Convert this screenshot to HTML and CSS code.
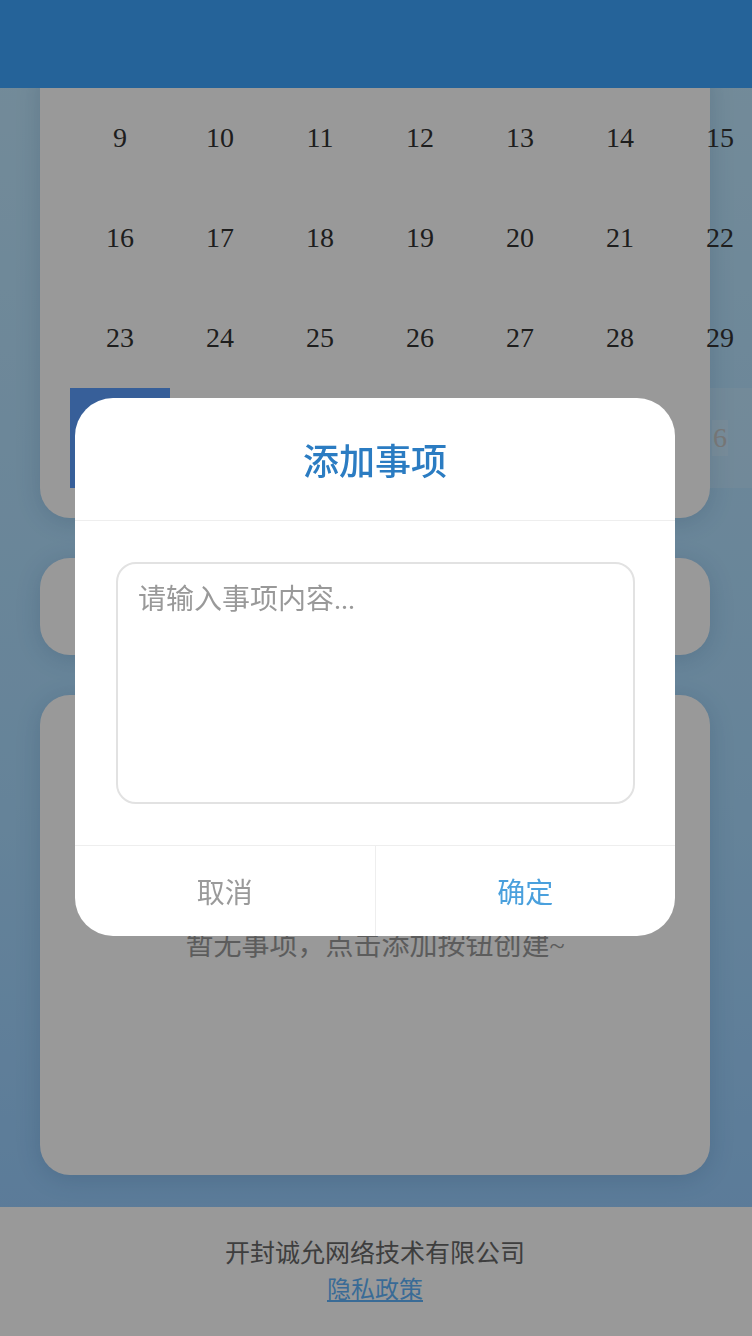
FILE: index.html
```html
<!DOCTYPE html>
<html lang="zh-CN">
<head>
<meta charset="utf-8">
<title>日历事项</title>
<link rel="stylesheet" href="styles.css">
</head>
<body>
<div class="page">
  <header class="topbar"></header>
  <main class="content">
    <section class="card calendar">
      <div class="cal-grid">
        <div class="day"><span>9</span></div><div class="day"><span>10</span></div><div class="day"><span>11</span></div><div class="day"><span>12</span></div><div class="day"><span>13</span></div><div class="day"><span>14</span></div><div class="day"><span>15</span></div>
        <div class="day"><span>16</span></div><div class="day"><span>17</span></div><div class="day"><span>18</span></div><div class="day"><span>19</span></div><div class="day"><span>20</span></div><div class="day"><span>21</span></div><div class="day"><span>22</span></div>
        <div class="day"><span>23</span></div><div class="day"><span>24</span></div><div class="day"><span>25</span></div><div class="day"><span>26</span></div><div class="day"><span>27</span></div><div class="day"><span>28</span></div><div class="day"><span>29</span></div>
        <div class="day selected"><span>30</span></div><div class="day other"><span>1</span></div><div class="day other"><span>2</span></div><div class="day other"><span>3</span></div><div class="day other"><span>4</span></div><div class="day other"><span>5</span></div><div class="day other"><span>6</span></div>
      </div>
    </section>
    <section class="card actions"></section>
    <section class="card events">
      <p class="empty">暂无事项，点击添加按钮创建~</p>
    </section>
  </main>
  <footer class="footer">
    <p class="company">开封诚允网络技术有限公司</p>
    <a class="privacy" href="#">隐私政策</a>
  </footer>
</div>

<div class="mask">
  <div class="dialog">
    <div class="dialog-title">添加事项</div>
    <div class="dialog-body">
      <textarea class="dialog-input" placeholder="请输入事项内容..."></textarea>
    </div>
    <div class="dialog-actions">
      <div class="btn cancel">取消</div>
      <div class="btn confirm">确定</div>
    </div>
  </div>
</div>
</body>
</html>
```
FILE: styles.css
```css
html, body {
  margin: 0;
  padding: 0;
}
body {
  font-family: "Liberation Serif", "Noto Sans CJK SC", serif;
  color: #333;
  background: linear-gradient(180deg, #c2e9ff 0%, #a9dbff 60%, #93caff 100%);
  overflow: hidden;
}
.page {
  width: 100%;
  min-height: 1336px;
  display: flex;
  flex-direction: column;
}
.topbar {
  position: fixed;
  top: 0;
  left: 0;
  right: 0;
  height: 88px;
  background: #3fa5ff;
  z-index: 10;
}
.content {
  width: 750px;
  box-sizing: border-box;
  padding: 58px 40px 32px;
  display: flex;
  flex-direction: column;
  gap: 40px;
}
.card {
  background: #fff;
  border-radius: 30px;
  box-shadow: 0 4px 24px rgba(30, 80, 130, 0.18);
}
.calendar {
  padding: 30px;
}
.cal-grid {
  display: grid;
  grid-template-columns: repeat(7, 100px);
  grid-auto-rows: 100px;
}
.day {
  display: flex;
  align-items: center;
  justify-content: center;
  font-size: 28px;
  color: #333;
}
.day.other {
  background: rgba(255, 255, 255, 0.14);
}
.day.other span {
  color: #c4c4c4;
  background: rgba(255, 255, 255, 0.14);
  padding: 2px 1px;
}
.day.selected {
  background: #5c9fff;
  color: #fff;
}
.actions {
  height: 97px;
}
.events {
  height: 480px;
  box-sizing: border-box;
  padding-top: 16px;
  display: flex;
  align-items: center;
  justify-content: center;
}
.empty {
  margin: 0;
  font-size: 28px;
  color: #9a9a9a;
}
.footer {
  background: #fff;
  padding: 29px 0 30px;
  display: flex;
  flex-direction: column;
  align-items: center;
  width: 100%;
  box-sizing: border-box;
  padding-right: 2px;
  flex: 1;
}
.company {
  margin: 0;
  font-size: 25px;
  line-height: 36px;
  color: #686868;
}
.privacy {
  font-size: 24px;
  line-height: 36px;
  color: #5fb3fb;
  text-decoration: underline;
}
.mask {
  position: fixed;
  inset: 0;
  background: rgba(0, 0, 0, 0.4);
  display: flex;
  align-items: center;
  justify-content: center;
  padding-right: 2px;
  padding-bottom: 2px;
  z-index: 20;
}
.dialog {
  width: 600px;
  background: #fff;
  border-radius: 38px;
  overflow: hidden;
}
.dialog-title {
  height: 122px;
  border-bottom: 1px solid #eeeeee;
  display: flex;
  align-items: center;
  justify-content: center;
  font-size: 36px;
  font-weight: 500;
  color: #2b7cc2;
}
.dialog-body {
  padding: 41px 40px 41px 41px;
}
.dialog-input {
  display: block;
  width: 519px;
  height: 242px;
  box-sizing: border-box;
  border: 2px solid #e2e2e2;
  border-radius: 20px;
  padding: 18px 20px;
  font-family: "Liberation Serif", "Noto Sans CJK SC", serif;
  font-size: 28px;
  line-height: 36px;
  color: #333;
  resize: none;
  outline: none;
  background: #fff;
}
.dialog-input::placeholder {
  color: #999;
}
.dialog-actions {
  display: flex;
  border-top: 1px solid #eeeeee;
  height: 90px;
}
.btn {
  flex: 1;
  display: flex;
  align-items: center;
  justify-content: center;
  font-size: 28px;
}
.cancel {
  color: #9a9a9a;
  border-right: 1px solid #eeeeee;
}
.confirm {
  color: #4aa0dd;
}
```
